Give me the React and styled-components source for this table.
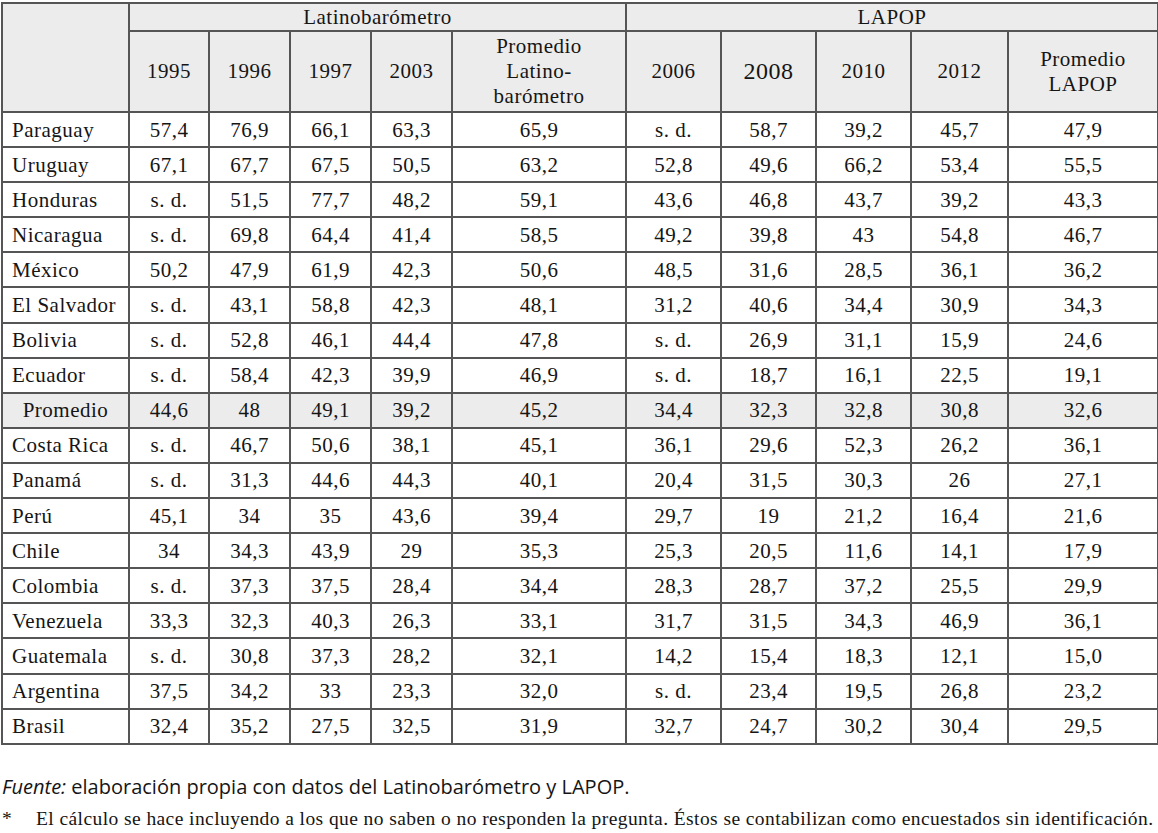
import React from 'react';
import styled, { createGlobalStyle } from 'styled-components';

const latino = ['1995', '1996', '1997', '2003'];
const lapop = ['2006', '2008', '2010', '2012'];

const rows = [
  ['Paraguay', '57,4', '76,9', '66,1', '63,3', '65,9', 's. d.', '58,7', '39,2', '45,7', '47,9'],
  ['Uruguay', '67,1', '67,7', '67,5', '50,5', '63,2', '52,8', '49,6', '66,2', '53,4', '55,5'],
  ['Honduras', 's. d.', '51,5', '77,7', '48,2', '59,1', '43,6', '46,8', '43,7', '39,2', '43,3'],
  ['Nicaragua', 's. d.', '69,8', '64,4', '41,4', '58,5', '49,2', '39,8', '43', '54,8', '46,7'],
  ['México', '50,2', '47,9', '61,9', '42,3', '50,6', '48,5', '31,6', '28,5', '36,1', '36,2'],
  ['El Salvador', 's. d.', '43,1', '58,8', '42,3', '48,1', '31,2', '40,6', '34,4', '30,9', '34,3'],
  ['Bolivia', 's. d.', '52,8', '46,1', '44,4', '47,8', 's. d.', '26,9', '31,1', '15,9', '24,6'],
  ['Ecuador', 's. d.', '58,4', '42,3', '39,9', '46,9', 's. d.', '18,7', '16,1', '22,5', '19,1'],
  ['Promedio', '44,6', '48', '49,1', '39,2', '45,2', '34,4', '32,3', '32,8', '30,8', '32,6'],
  ['Costa Rica', 's. d.', '46,7', '50,6', '38,1', '45,1', '36,1', '29,6', '52,3', '26,2', '36,1'],
  ['Panamá', 's. d.', '31,3', '44,6', '44,3', '40,1', '20,4', '31,5', '30,3', '26', '27,1'],
  ['Perú', '45,1', '34', '35', '43,6', '39,4', '29,7', '19', '21,2', '16,4', '21,6'],
  ['Chile', '34', '34,3', '43,9', '29', '35,3', '25,3', '20,5', '11,6', '14,1', '17,9'],
  ['Colombia', 's. d.', '37,3', '37,5', '28,4', '34,4', '28,3', '28,7', '37,2', '25,5', '29,9'],
  ['Venezuela', '33,3', '32,3', '40,3', '26,3', '33,1', '31,7', '31,5', '34,3', '46,9', '36,1'],
  ['Guatemala', 's. d.', '30,8', '37,3', '28,2', '32,1', '14,2', '15,4', '18,3', '12,1', '15,0'],
  ['Argentina', '37,5', '34,2', '33', '23,3', '32,0', 's. d.', '23,4', '19,5', '26,8', '23,2'],
  ['Brasil', '32,4', '35,2', '27,5', '32,5', '31,9', '32,7', '24,7', '30,2', '30,4', '29,5'],
];

const widths = [127, 80, 81, 81, 81, 174, 95, 95, 95, 97, 150];

const GlobalStyle = createGlobalStyle`
  body {
    margin: 0;
    background: #ffffff;
  }
`;

const Page = styled.div`
  padding: 2px 1px 0 1px;
  width: 1156px;
  color: #151515;
`;

const Table = styled.table`
  width: 1156px;
  table-layout: fixed;
  border-collapse: collapse;
  font-family: 'Liberation Serif', serif;
  font-size: 21px;
  letter-spacing: 0.5px;
`;

const HeadCell = styled.th`
  font-weight: 400;
  background: #ececec;
  border: 2px solid #555;
  text-align: center;
  padding: 0;
  height: ${(p) => (p.$group ? 26 : 79)}px;
  line-height: 25px;
  font-size: ${(p) => (p.$big ? 24 : 21)}px;
`;

const Row = styled.tr`
  background: ${(p) => (p.$shade ? '#ececec' : '#ffffff')};
`;

const Cell = styled.td`
  border: 2px solid #555;
  height: 33.1px;
  padding: 0;
  text-align: center;
  line-height: 24px;
  white-space: nowrap;
`;

const NameCell = styled(Cell)`
  text-align: ${(p) => (p.$center ? 'center' : 'left')};
  padding-left: ${(p) => (p.$center ? 0 : 9)}px;
`;

const Notes = styled.div`
  margin-top: 29px;
  padding-left: 1px;
`;

const Source = styled.p`
  margin: 0;
  font-family: 'Open Sans', sans-serif;
  font-size: 20px;
  line-height: 26px;
  color: #151515;

  em {
    font-style: italic;
  }
`;

const Footnote = styled.p`
  margin: 8px 0 0 0;
  display: flex;
  font-family: 'Liberation Serif', serif;
  font-size: 19.5px;
  letter-spacing: 0.42px;
  line-height: 22px;
  color: #151515;
  white-space: nowrap;

  span {
    width: 34px;
    flex: none;
  }
`;

const App = () => {
  return (
    <Page>
      <GlobalStyle />
      <Table>
        <colgroup>
          {widths.map((w, i) => (
            <col key={i} style={{ width: w }} />
          ))}
        </colgroup>
        <thead>
          <tr>
            <HeadCell rowSpan={2} />
            <HeadCell $group colSpan={5}>Latinobarómetro</HeadCell>
            <HeadCell $group colSpan={5}>LAPOP</HeadCell>
          </tr>
          <tr>
            {latino.map((y) => (
              <HeadCell key={y}>{y}</HeadCell>
            ))}
            <HeadCell>
              Promedio
              <br />
              Latino-
              <br />
              barómetro
            </HeadCell>
            {lapop.map((y) => (
              <HeadCell key={y} $big={y === '2008'}>
                {y}
              </HeadCell>
            ))}
            <HeadCell>
              Promedio
              <br />
              LAPOP
            </HeadCell>
          </tr>
        </thead>
        <tbody>
          {rows.map((r) => {
            const avg = r[0] === 'Promedio';
            return (
              <Row key={r[0]} $shade={avg}>
                <NameCell $center={avg}>{r[0]}</NameCell>
                {r.slice(1).map((v, i) => (
                  <Cell key={i}>{v}</Cell>
                ))}
              </Row>
            );
          })}
        </tbody>
      </Table>
      <Notes>
        <Source>
          <em>Fuente:</em> elaboración propia con datos del Latinobarómetro y LAPOP.
        </Source>
        <Footnote>
          <span>*</span>
          El cálculo se hace incluyendo a los que no saben o no responden la pregunta. Éstos se
          contabilizan como encuestados sin identificación.
        </Footnote>
      </Notes>
    </Page>
  );
};

export default App;
